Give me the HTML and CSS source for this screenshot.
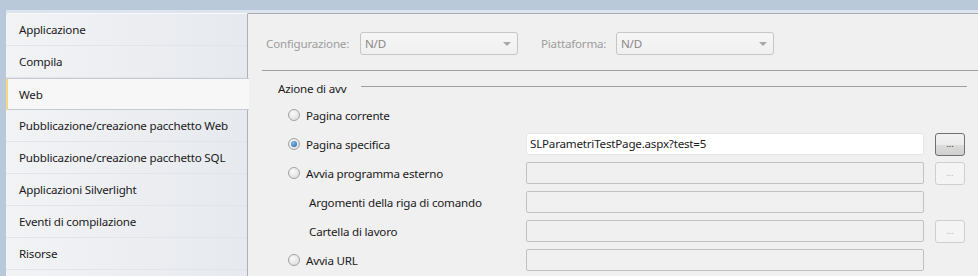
FILE: index.html
```html
<!DOCTYPE html>
<html>
<head>
<meta charset="utf-8">
<link rel="stylesheet" href="styles.css">
</head>
<body>
<div class="window">
  <div class="topbar"></div>
  <div class="body">
    <nav class="sidebar">
      <div class="item">Applicazione</div>
      <div class="item">Compila</div>
      <div class="item selected">Web</div>
      <div class="item">Pubblicazione/creazione pacchetto Web</div>
      <div class="item">Pubblicazione/creazione pacchetto SQL</div>
      <div class="item">Applicazioni Silverlight</div>
      <div class="item">Eventi di compilazione</div>
      <div class="item">Risorse</div>
    </nav>
    <main class="main">
      <div class="config">
        <span class="clabel">Configurazione:</span>
        <div class="select sel1"><span>N/D</span><i class="arrow"></i></div>
        <span class="clabel plabel">Piattaforma:</span>
        <div class="select sel2"><span>N/D</span><i class="arrow"></i></div>
      </div>
      <div class="sep"></div>
      <div class="group">
        <div class="ghead"><span>Azione di avv</span><div class="gline"></div></div>
        <div class="rows">
          <div class="row">
            <label class="radio"><i class="rb"></i>Pagina corrente</label>
          </div>
          <div class="row">
            <label class="radio"><i class="rb on"></i>Pagina specifica</label>
            <div class="input white">SLParametriTestPage.aspx?test=5</div>
            <div class="btn">...</div>
          </div>
          <div class="row">
            <label class="radio"><i class="rb"></i>Avvia programma esterno</label>
            <div class="input"></div>
            <div class="btn dis">...</div>
          </div>
          <div class="row">
            <label class="sub">Argomenti della riga di comando</label>
            <div class="input"></div>
          </div>
          <div class="row">
            <label class="sub">Cartella di lavoro</label>
            <div class="input"></div>
            <div class="btn dis">...</div>
          </div>
          <div class="row">
            <label class="radio"><i class="rb"></i>Avvia URL</label>
            <div class="input"></div>
          </div>
        </div>
      </div>
    </main>
  </div>
</div>
</body>
</html>
```
FILE: styles.css
```css
* { box-sizing: border-box; }
html, body { margin: 0; padding: 0; }
body {
  width: 978px;
  height: 276px;
  overflow: hidden;
  background: #bac9da;
  font-family: "Noto Sans", "Open Sans", sans-serif;
  font-size: 11.6px;
  letter-spacing: -0.2px;
  color: #1a1a1a;
}
.window { display: flex; flex-direction: column; height: 276px; }
.topbar { height: 10px; background: #bac9da; flex: none; }
.body { display: flex; flex: 1; padding-left: 6px; background: linear-gradient(#bac9da 0 0) left / 6px 100% no-repeat, linear-gradient(#dde4ed, #dde4ed) top / 100% 4px no-repeat, #bac9da; }

.sidebar {
  width: 242px;
  flex: none;
  margin-top: 3px;
  border-top-left-radius: 3px;
  border-top: 1px solid #f8f9fb;
  background: linear-gradient(90deg, #f2f3f5, #e6e9ee);
  border-right: 1px solid #a9b1bd;
  display: flex;
  flex-direction: column;
  position: relative;
  z-index: 1;
}
.item {
  height: 32px;
  line-height: 31px;
  padding-left: 13px;
  border-bottom: 1px solid #e1e4ea;
  white-space: nowrap;
}
.item.selected {
  background: #f7f7f7;
  margin-right: -2px;
  border-left: 2px solid #f4d88a;
  padding-left: 11px;
  border-top: 1px solid #c5cad3;
  border-bottom: 1px solid #c5cad3;
  height: 32px;
}
.main {
  flex: 1;
  margin-top: 3px;
  background: #f0f0f0;
  border-top: 1px solid #a7aeb8;
  padding-left: 18px;
}
.config {
  display: flex;
  align-items: center;
  height: 23px;
  margin-top: 18px;
}
.clabel { color: #9d9d9d; width: 94px; }
.plabel { width: 75px; margin-left: 23px; }
.select {
  height: 23px;
  width: 158px;
  border: 1px solid #c6c6c6;
  border-radius: 3px;
  background: linear-gradient(#f6f6f6, #f0f0f0);
  color: #888;
  display: flex;
  align-items: center;
  justify-content: space-between;
  padding: 0 6px 0 4px;
}
.arrow {
  width: 0; height: 0;
  border-left: 4px solid transparent;
  border-right: 4px solid transparent;
  border-top: 4px solid #a8a8a8;
}
.sep {
  margin-top: 15px;
  height: 1px;
  background: #a0a0a0;
  margin-left: -4px;
}
.group { padding-left: 12px; }
.ghead {
  display: flex;
  align-items: center;
  height: 18px;
  margin-top: 8px;
}
.ghead span { flex: none; }
.gline { height: 1px; background: #a0a0a0; flex: 1; margin-left: 15px; margin-right: 11px; position: relative; top: -2px; }
.rows {
  display: flex;
  flex-direction: column;
  gap: 7px;
  margin-top: 7px;
  padding-left: 10px;
}
.row {
  display: flex;
  align-items: center;
  height: 22px;
}
.radio, .sub {
  width: 238px;
  display: flex;
  align-items: center;
  flex: none;
}
.sub { padding-left: 21px; }
.rb {
  width: 12px; height: 12px;
  border-radius: 50%;
  border: 1px solid #a3a3a3;
  background: radial-gradient(circle at 40% 35%, #fafafa, #d8d8d8);
  margin-right: 6px;
  position: relative;
  flex: none;
}
.rb.on::after {
  content: "";
  position: absolute;
  left: 2px; top: 2px;
  width: 6px; height: 6px;
  border-radius: 50%;
  background: radial-gradient(circle at 40% 35%, #7fc0f0, #1c5a9c);
}
.input {
  width: 398px;
  height: 22px;
  border: 1px solid #c2c2c2;
  border-radius: 2px;
  background: #f0f0f0;
  padding-left: 3px;
  line-height: 20px;
}
.input.white { background: #fff; border-color: #e6e6e6; }
.btn {
  margin-left: 11px;
  width: 30px;
  height: 23px;
  border: 1px solid #707070;
  border-radius: 3px;
  background: linear-gradient(#f2f2f2 0%, #ebebeb 50%, #dddddd 51%, #cfcfcf 100%);
  font-size: 9px;
  letter-spacing: 0;
  text-align: center;
  line-height: 20px;
  color: #333;
}
.btn.dis {
  border-color: #cfcfcf;
  background: #f4f4f4;
  color: #b8b8b8;
}
```
